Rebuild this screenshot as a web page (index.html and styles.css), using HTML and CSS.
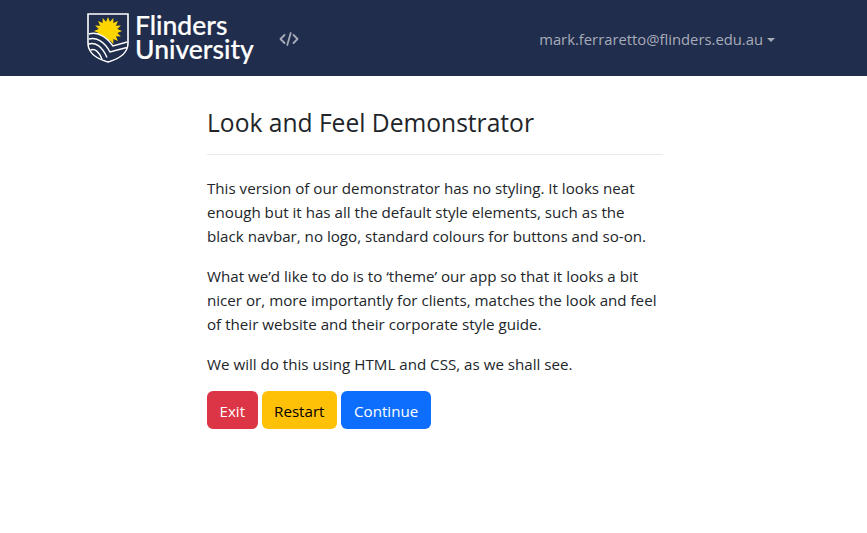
FILE: index.html
```html
<!DOCTYPE html>
<html lang="en">
<head>
    <meta charset="UTF-8">
    <meta name="viewport" content="width=device-width, initial-scale=1.0">
    <title>Look and Feel Demonstrator</title>
    <link rel="stylesheet" href="styles.css">
</head>
<body>
    <nav class="navbar">
        <a class="brand" href="#">
            <svg class="crest" width="42" height="50" viewBox="0 0 42 50">
                <path d="M1 1H41V30C41 41 31 46 21 49C11 46 1 41 1 30Z" fill="#212d4d" stroke="#fff" stroke-width="1.6"/>
                <polygon fill="#ffd500" points="21,4 22.900,8.700 26.400,5.100 26.300,10.100 30.900,8.100 28.900,12.700 33.900,12.600 30.300,16.100 35,18 30.300,19.900 33.900,23.400 28.900,23.300 30.900,27.900 26.300,25.900 26.400,30.900 22.900,27.300 21,32 19.100,27.300 15.600,30.900 15.700,25.900 11.100,27.900 13.100,23.300 8.100,23.400 11.700,19.900 7,18 11.700,16.100 8.100,12.600 13.100,12.700 11.100,8.100 15.700,10.100 15.600,5.100 19.100,8.700"/>
                <path d="M1.800 21C10 18.500 19 23 26 33L40 28.500V30C40 41 31 45 21 48C11 45 2 41 2 30Z" fill="#212d4d"/>
                <path d="M1.800 21C10 18.500 19 23 26 33L40.200 29M1.800 26C9 24 17 28 23 39L39.800 34.500M1.800 31C8 29 15 33 20 44.500M3.500 37C8 35 12 39 15 46" fill="none" stroke="#fff" stroke-width="1.400"/>
            </svg>
            <span class="brand-name">
                <span class="brand-line">Flinders</span>
                <span class="brand-line">University</span>
            </span>
        </a>
        <svg class="code-icon" width="20" height="14" viewBox="0 0 20 14">
            <path d="M5.500 3L1.500 7L5.500 11M14.500 3L18.500 7L14.500 11M11.700 1L8.300 13" fill="none" stroke="#a7acb9" stroke-width="1.800" stroke-linecap="round" stroke-linejoin="round"/>
        </svg>
        <a class="user-menu" href="#">mark.ferraretto@flinders.edu.au<span class="caret"></span></a>
    </nav>

    <main class="content">
        <h1>Look and Feel Demonstrator</h1>
        <hr>
        <p>This version of our demonstrator has no styling. It looks neat enough but it has all the default style elements, such as the black navbar, no logo, standard colours for buttons and so-on.</p>
        <p>What we’d like to do is to ‘theme’ our app so that it looks a bit nicer or, more importantly for clients, matches the look and feel of their website and their corporate style guide.</p>
        <p>We will do this using HTML and CSS, as we shall see.</p>
        <div class="buttons">
            <button class="btn btn-exit">Exit</button>
            <button class="btn btn-restart">Restart</button>
            <button class="btn btn-continue">Continue</button>
        </div>
    </main>
</body>
</html>
```
FILE: styles.css
```css
body {
    margin: 0;
    font-family: "Open Sans", "Noto Sans", sans-serif;
    font-size: 16px;
    line-height: 24px;
    color: #212529;
    background-color: #fff;
}
.navbar {
    display: flex;
    align-items: center;
    height: 76px;
    padding: 0 92px 0 87px;
    background-color: #212d4d;
}
.brand {
    display: flex;
    align-items: center;
    gap: 6px;
    color: #fff;
    text-decoration: none;
}
.crest {
    display: block;
}
.brand-name {
    display: block;
    margin-top: -3px;
    font-family: "Lato", sans-serif;
    font-size: 26.500px;
    font-weight: 500;
    -webkit-text-stroke: 0.2px #fff;
}
.brand-line {
    display: block;
    height: 24px;
    line-height: 24px;
}
.code-icon {
    margin: 2px 0 0 25px;
}
.user-menu {
    margin: 2px 0 0 auto;
    color: #a7acb9;
    text-decoration: none;
    font-size: 14.800px;
}
.caret {
    display: inline-block;
    margin-left: 4px;
    vertical-align: 3px;
    border-top: 4px solid #a7acb9;
    border-left: 4px solid transparent;
    border-right: 4px solid transparent;
}
.content {
    width: 456px;
    margin-left: 207px;
    padding-top: 31px;
}
h1 {
    margin: 0;
    font-size: 24.600px;
    font-weight: 400;
    line-height: 32px;
}
hr {
    margin: 15px 0 21px;
    border: 0;
    border-top: 1px solid #e9e9ea;
}
p {
    margin: 0 0 16px;
    font-size: 15.150px;
}
.buttons {
    display: flex;
    gap: 4px;
    margin-top: -1px;
}
.btn {
    height: 38px;
    padding: 1px 12.500px 0;
    font-family: inherit;
    font-size: 15.150px;
    border: 0;
    border-radius: 6px;
}
.btn-exit {
    background-color: #dc3545;
    color: #fff;
}
.btn-restart {
    background-color: #ffc107;
    color: #000;
}
.btn-continue {
    padding: 1px 13px 0;
    background-color: #0d6efd;
    color: #fff;
}
```
